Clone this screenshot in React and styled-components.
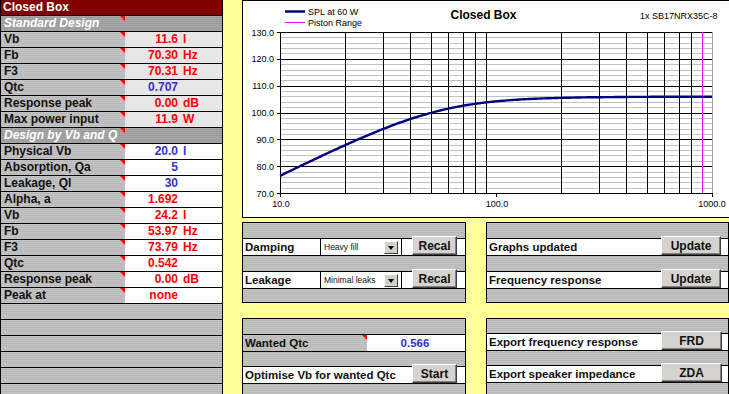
import React from "react";
import styled, { createGlobalStyle } from "styled-components";

const GlobalStyle = createGlobalStyle`
  html, body {
    margin: 0;
    padding: 0;
    width: 729px;
    height: 394px;
    overflow: hidden;
    font-family: "Liberation Sans", Arial, sans-serif;
  }
`;

const stripes = (a, b) =>
  `repeating-linear-gradient(to bottom, ${a} 0px, ${a} 1px, ${b} 1px, ${b} 2px)`;

const Page = styled.div`
  display: flex;
  width: 729px;
  height: 394px;
  overflow: hidden;
  background: #ffff99;
`;

/* ---------- left sheet ---------- */

const Sheet = styled.div`
  width: 223px;
  flex: none;
  height: 394px;
  box-sizing: border-box;
  border-left: 1px solid #000;
  border-right: 1px solid #000;
  background: ${stripes("#c3c3c3", "#b9b9b9")};
  display: flex;
  flex-direction: column;
`;

const TitleRow = styled.div`
  height: 15px;
  line-height: 15px;
  border-bottom: 1px solid #000;
  background: #800000;
  color: #fff;
  font-weight: bold;
  font-size: 12px;
  padding-left: 2px;
`;

const Row = styled.div`
  display: flex;
  height: 15px;
  flex: none;
  border-bottom: 1px solid #000;
  font-size: 12px;
  line-height: 15px;
  font-weight: bold;
  background: ${(p) => (p.$section ? stripes("#a6a6a6", "#9b9b9b") : "transparent")};
`;

const Label = styled.div`
  position: relative;
  width: 124px;
  flex: none;
  box-sizing: border-box;
  padding-left: 3px;
  color: ${(p) => (p.$section ? "#fff" : "#111")};
  font-style: ${(p) => (p.$section ? "italic" : "normal")};
  white-space: nowrap;
`;

const Mark = styled.span`
  position: absolute;
  top: 0;
  right: 0;
  width: 0;
  height: 0;
  border-top: 5px solid #ff0000;
  border-left: 5px solid transparent;
`;

const Value = styled.div`
  flex: 1;
  display: flex;
  background: ${(p) => (p.$tone === "light" ? "#e6e6e6" : "#fff")};
  color: ${(p) => p.$color};
`;

const Num = styled.span`
  width: 53px;
  text-align: right;
`;

const Unit = styled.span`
  margin-left: 5px;
`;

const standard = [
  ["Vb", "11.6", "l", "red"],
  ["Fb", "70.30", "Hz", "red"],
  ["F3", "70.31", "Hz", "red"],
  ["Qtc", "0.707", "", "blue"],
  ["Response peak", "0.00", "dB", "red"],
  ["Max power input", "11.9", "W", "red"],
];

const byVbQ = [
  ["Physical Vb", "20.0", "l", "blue"],
  ["Absorption, Qa", "5", "", "blue"],
  ["Leakage, Ql", "30", "", "blue"],
  ["Alpha, a", "1.692", "", "red"],
  ["Vb", "24.2", "l", "red"],
  ["Fb", "53.97", "Hz", "red"],
  ["F3", "73.79", "Hz", "red"],
  ["Qtc", "0.542", "", "red"],
  ["Response peak", "0.00", "dB", "red"],
  ["Peak at", "none", "", "red"],
];

const colors = { red: "#ff0000", blue: "#3333cc" };

const DataRow = ({ item, tone }) => (
  <Row>
    <Label>
      {item[0]}
      <Mark />
    </Label>
    <Value $tone={tone} $color={colors[item[3]]}>
      <Num>{item[1]}</Num>
      {item[2] && <Unit>{item[2]}</Unit>}
    </Value>
  </Row>
);

const Section = ({ title }) => (
  <Row $section>
    <Label $section>
      {title}
      <Mark />
    </Label>
  </Row>
);

/* ---------- right side ---------- */

const Right = styled.div`
  flex: 1;
  padding-left: 19px;
  min-width: 0;
`;

const ChartBox = styled.div`
  width: 500px;
  height: 218px;
  box-sizing: border-box;
  border: 1px solid #000;
  border-right: none;
  background: #fff;
`;

const Panels = styled.div`
  display: grid;
  grid-template-columns: 224px 243px;
  column-gap: 20px;
  row-gap: 15px;
  margin-top: 4px;
`;

const Panel = styled.div`
  box-sizing: border-box;
  border: 1px solid #000;
  height: ${(p) => (p.$open ? "90px" : "81px")};
  background: ${stripes("#c3c3c3", "#b9b9b9")};
  display: flex;
  flex-direction: column;
`;

const Band = styled.div`
  height: ${(p) => p.$h || 15}px;
  flex: none;
`;

const CtrlRow = styled.div`
  display: flex;
  align-items: flex-start;
  height: 16px;
  flex: none;
  border-top: 1px solid #000;
  border-bottom: 1px solid #000;
  background: #fff;
  font-size: 11.5px;
  font-weight: bold;
  line-height: 16px;
  color: #111;
`;

const CtrlLabel = styled.div`
  position: relative;
  box-sizing: border-box;
  padding-left: 2px;
  white-space: nowrap;
  width: ${(p) => (p.$w ? `${p.$w}px` : "auto")};
  height: 16px;
  background: ${(p) => (p.$gray ? stripes("#c3c3c3", "#b9b9b9") : "transparent")};
`;

const CtrlValue = styled.div`
  flex: 1;
  text-align: center;
  color: #3333cc;
  padding-right: 2px;
`;

const Select = styled.div`
  width: 82px;
  height: 16px;
  box-sizing: border-box;
  border-left: 1px solid #000;
  border-right: 1px solid #000;
  display: flex;
  align-items: center;
  padding-left: 3px;
  font-size: 8.5px;
  font-weight: normal;
`;

const SelectText = styled.span`
  flex: 1;
  white-space: nowrap;
`;

const Drop = styled.span`
  width: 14px;
  height: 13px;
  flex: none;
  box-sizing: border-box;
  margin-right: 3px;
  margin-top: 1px;
  background: #d4d0c8;
  border: 1px solid;
  border-color: #fff #404040 #404040 #fff;
  display: flex;
  align-items: center;
  justify-content: center;

  &::after {
    content: "";
    border-top: 4px solid #000;
    border-left: 3.5px solid transparent;
    border-right: 3.5px solid transparent;
  }
`;

const Button = styled.button`
  width: ${(p) => p.$w}px;
  height: 19px;
  margin: -3px ${(p) => p.$mr}px 0 ${(p) => (p.$ml != null ? `${p.$ml}px` : "auto")};
  padding: 0;
  box-sizing: border-box;
  background: #d6d3ce;
  border: 1px solid;
  border-color: #fff #404040 #404040 #fff;
  box-shadow: inset -1px -1px 0 #808080;
  font-family: "Liberation Sans", Arial, sans-serif;
  font-size: 12px;
  font-weight: bold;
  color: #111;
  line-height: 16px;
`;

/* ---------- chart ---------- */

const X = (f) => 37 + 216 * Math.log10(f / 10);
const Y = (v) => 31 + ((130 - v) * 161) / 60;

const spl = (f) => {
  const x = f / 54;
  const q = 0.542;
  const x2 = x * x;
  const h = (x2 * x2) / ((1 - x2) * (1 - x2) + x2 / (q * q));
  return 105.9 + 10 * Math.log10(h);
};

const Chart = () => {
  const vlines = [];
  [10, 100].forEach((d) => {
    for (let k = 2; k <= 9; k++) vlines.push(k * d);
  });
  const minor = [];
  for (let v = 72; v < 130; v += 2) if (v % 10) minor.push(v);
  const major = [80, 90, 100, 110, 120];
  const pts = [];
  for (let i = 0; i <= 240; i++) {
    const f = 10 * Math.pow(100, i / 240);
    pts.push(`${X(f).toFixed(1)},${Y(spl(f)).toFixed(1)}`);
  }
  const text = { fontFamily: "Liberation Sans, Arial, sans-serif", fontSize: 9, fill: "#000" };
  return (
    <svg width="499" height="216" style={{ display: "block" }}>
      <g shapeRendering="crispEdges">
        {minor.map((v) => (
          <line key={v} x1={37} x2={469} y1={Math.round(Y(v)) + 0.5} y2={Math.round(Y(v)) + 0.5} stroke="#c0c0c0" />
        ))}
        {vlines.map((f) => (
          <line key={f} x1={Math.round(X(f)) + 0.5} x2={Math.round(X(f)) + 0.5} y1={31} y2={192} stroke="#000" />
        ))}
        {major.map((v) => (
          <line key={v} x1={34} x2={469} y1={Math.round(Y(v)) + 0.5} y2={Math.round(Y(v)) + 0.5} stroke="#000" />
        ))}
        <line x1={34} x2={469} y1={31.5} y2={31.5} stroke="#000" />
        <line x1={469.5} x2={469.5} y1={31} y2={192} stroke="#a0a0a0" />
        <line x1={X(900) + 0.5} x2={X(900) + 0.5} y1={31} y2={192} stroke="#ff00ff" />
        <line x1={34} x2={470} y1={192.5} y2={192.5} stroke="#000" />
        <line x1={37.5} x2={37.5} y1={31} y2={196} stroke="#000" />
        <line x1={253.5} x2={253.5} y1={192} y2={196} stroke="#000" />
        <line x1={469.5} x2={469.5} y1={192} y2={196} stroke="#000" />
      </g>
      <polyline points={pts.join(" ")} fill="none" stroke="#000080" strokeWidth="2.4" />
      {[130, 120, 110, 100, 90, 80, 70].map((v) => (
        <text key={v} x={31} y={Y(v) + 3.5} textAnchor="end" {...text}>
          {v.toFixed(1)}
        </text>
      ))}
      <text x={38} y={205.5} textAnchor="middle" {...text}>10.0</text>
      <text x={254} y={205.5} textAnchor="middle" {...text}>100.0</text>
      <text x={469} y={205.5} textAnchor="middle" {...text}>1000.0</text>
      <line x1={42} x2={62} y1={10.5} y2={10.5} stroke="#000080" strokeWidth="2.5" />
      <text x={65} y={13.5} {...text}>SPL at 60 W</text>
      <line x1={42} x2={62} y1={21.5} y2={21.5} stroke="#ff00ff" strokeWidth="1" />
      <text x={65} y={25} {...text}>Piston Range</text>
      <text x={240.5} y={18} textAnchor="middle" {...text} fontSize={12} fontWeight="bold">
        Closed Box
      </text>
      <text x={397} y={17.5} {...text}>1x SB17NRX35C-8</text>
    </svg>
  );
};

export default function App() {
  return (
    <>
      <GlobalStyle />
      <Page>
        <Sheet>
          <TitleRow>Closed Box</TitleRow>
          <Section title="Standard Design" />
          {standard.map((item, i) => (
            <DataRow key={"s" + i} item={item} tone="light" />
          ))}
          <Section title="Design by Vb and Q" />
          {byVbQ.map((item, i) => (
            <DataRow key={"q" + i} item={item} tone="white" />
          ))}
          {[0, 1, 2, 3, 4, 5].map((i) => (
            <Row key={"e" + i} />
          ))}
        </Sheet>
        <Right>
          <ChartBox>
            <Chart />
          </ChartBox>
          <Panels>
            <Panel>
              <Band />
              <CtrlRow>
                <CtrlLabel $w={77}>Damping</CtrlLabel>
                <Select>
                  <SelectText>Heavy fill</SelectText>
                  <Drop />
                </Select>
                <Button $w={45} $ml={10} $mr={7}>Recal</Button>
              </CtrlRow>
              <Band />
              <CtrlRow>
                <CtrlLabel $w={77}>Leakage</CtrlLabel>
                <Select>
                  <SelectText>Minimal leaks</SelectText>
                  <Drop />
                </Select>
                <Button $w={45} $ml={10} $mr={7}>Recal</Button>
              </CtrlRow>
              <Band $h={13} />
            </Panel>
            <Panel>
              <Band />
              <CtrlRow>
                <CtrlLabel>Graphs updated</CtrlLabel>
                <Button $w={60} $mr={7}>Update</Button>
              </CtrlRow>
              <Band />
              <CtrlRow>
                <CtrlLabel>Frequency response</CtrlLabel>
                <Button $w={60} $mr={7}>Update</Button>
              </CtrlRow>
              <Band $h={13} />
            </Panel>
            <Panel $open>
              <Band />
              <CtrlRow>
                <CtrlLabel $w={124} $gray>
                  Wanted Qtc
                  <Mark />
                </CtrlLabel>
                <CtrlValue>0.566</CtrlValue>
              </CtrlRow>
              <Band $h={14} />
              <CtrlRow>
                <CtrlLabel>Optimise Vb for wanted Qtc</CtrlLabel>
                <Button $w={45} $mr={8}>Start</Button>
              </CtrlRow>
              <Band $h={20} />
            </Panel>
            <Panel $open>
              <Band $h={14} />
              <CtrlRow>
                <CtrlLabel>Export frequency response</CtrlLabel>
                <Button $w={61} $mr={6}>FRD</Button>
              </CtrlRow>
              <Band $h={14} />
              <CtrlRow>
                <CtrlLabel>Export speaker impedance</CtrlLabel>
                <Button $w={61} $mr={6}>ZDA</Button>
              </CtrlRow>
              <Band $h={20} />
            </Panel>
          </Panels>
        </Right>
      </Page>
    </>
  );
}
